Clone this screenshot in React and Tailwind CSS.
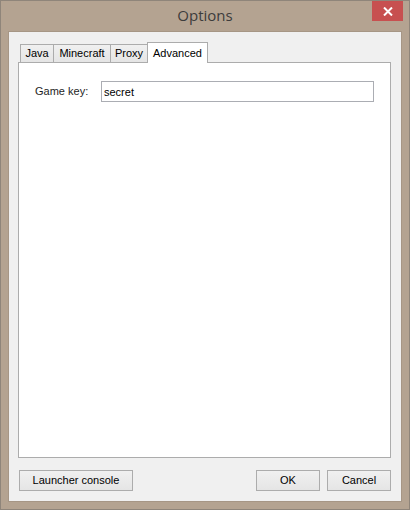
import React from 'react';

const tabs = [
    { label: 'Java', w: 'w-[34px]' },
    { label: 'Minecraft', w: 'w-[58px]' },
    { label: 'Proxy', w: 'w-[38px]' },
];

function Button({ children, className = '' }) {
    return (
        <button
            className={`h-[21px] border border-[#acacac] bg-gradient-to-b from-[#f0f0f0] to-[#e5e5e5] text-[11px] text-black leading-none flex items-center justify-center ${className}`}
        >
            {children}
        </button>
    );
}

export default function App() {
    return (
        <div
            className="w-[410px] h-[510px] bg-[#b4a391] border border-[#8f857a] flex flex-col relative"
            style={{ fontFamily: '"Liberation Sans", Arial, sans-serif' }}
        >
            {/* title bar */}
            <div className="h-[30px] flex items-center justify-center pb-[2px]">
                <span
                    className="text-[15px] text-[#3c3c3c]"
                    style={{ fontFamily: '"Open Sans", "Liberation Sans", sans-serif' }}
                >
                    Options
                </span>
            </div>
            <button className="absolute top-0 right-[6px] w-[31px] h-[20px] bg-[#c75050] flex items-center justify-center">
                <svg width="10" height="9" viewBox="0 0 10 9">
                    <path d="M1 0.5 L9 8.5 M9 0.5 L1 8.5" stroke="#fff" strokeWidth="2" />
                </svg>
            </button>

            {/* client area */}
            <div className="ml-[7px] w-[394px] h-[471px] border border-[#a69685] bg-[#f0f0f0] flex flex-col pl-[9px] pr-[10px] pt-[10px]">
                <div className="flex items-end h-[20px] pl-[2px]">
                    {tabs.map((t, i) => (
                        <div
                            key={t.label}
                            className={`${t.w} h-[18px] border-t border-l border-r border-[#acacac] bg-gradient-to-b from-[#f0f0f0] to-[#e5e5e5] text-[11px] text-black flex items-center justify-center ${i > 0 ? '-ml-px' : ''}`}
                        >
                            {t.label}
                        </div>
                    ))}
                    <div className="w-[61px] h-[21px] -ml-px -mb-px relative z-10 border-t border-l border-r border-[#acacac] bg-white text-[11px] text-black flex items-start justify-center pt-[2px]">
                        Advanced
                    </div>
                </div>
                <div className="w-[373px] h-[396px] border border-[#acacac] bg-white pl-[16px] pt-[18px]">
                    <div className="flex items-center">
                        <span className="w-[66px] text-[11px] text-[#1e1e1e]">Game key:</span>
                        <input
                            defaultValue="secret"
                            className="w-[273px] h-[21px] border border-[#abadb3] px-[2px] text-[11px] text-black outline-none"
                            style={{ fontFamily: '"Liberation Sans", Arial, sans-serif' }}
                        />
                    </div>
                </div>
                <div className="flex mt-[12px] pl-px">
                    <Button className="w-[114px]">Launcher console</Button>
                    <div className="flex-1" />
                    <Button className="w-[64px]">OK</Button>
                    <Button className="w-[64px] ml-[7px]">Cancel</Button>
                </div>
            </div>
        </div>
    );
}
